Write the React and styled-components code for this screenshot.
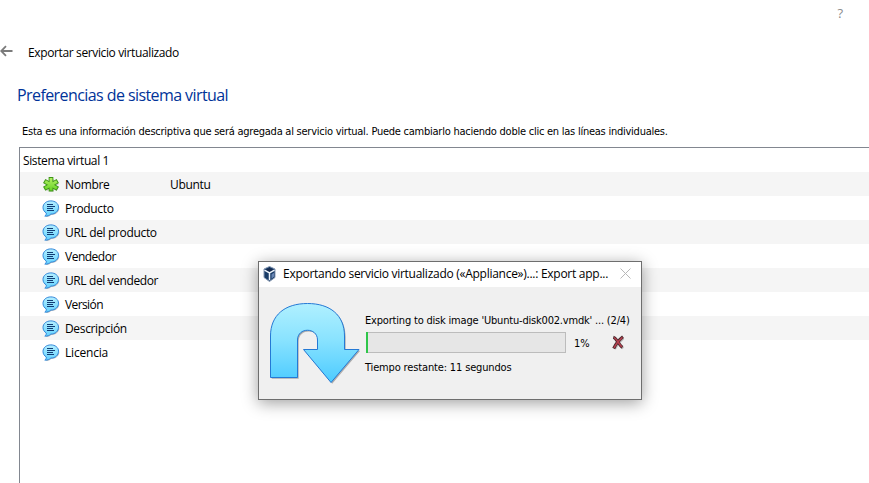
import React from 'react';
import styled, { createGlobalStyle } from 'styled-components';

const GlobalStyle = createGlobalStyle`
  *, *::before, *::after { box-sizing: border-box; }
  body { margin: 0; background: #fff; overflow: hidden; }
`;

const Wizard = styled.main`
  position: relative;
  display: flex;
  flex-direction: column;
  width: 869px;
  height: 483px;
  overflow: hidden;
  background: #fff;
  color: #000;
  font: 12px/16px 'Open Sans', 'Noto Sans', sans-serif;
`;

const TopBar = styled.div`
  display: flex;
  justify-content: flex-end;
  height: 40px;
  padding: 5px 26px 0 0;
  color: #8c8c8c;
  font-size: 13px;
`;

const Header = styled.header`
  display: flex;
  align-items: center;
  gap: 15px;
  height: 26px;
`;

const BackIcon = styled.svg`
  width: 13px;
  height: 12px;
  margin-top: -4px;
`;

const WizardTitle = styled.span`
  letter-spacing: -0.37px;
`;

const Heading = styled.h1`
  margin: 17px 0 0 17px;
  font-size: 16px;
  line-height: 24px;
  font-weight: 400;
  letter-spacing: -0.58px;
  color: #003399;
`;

const Description = styled.p`
  margin: 17px 0 0 22px;
  font: 11px/16px 'DejaVu Sans Condensed', 'DejaVu Sans', sans-serif;
  font-stretch: condensed;
  letter-spacing: -0.245px;
  white-space: nowrap;
`;

const Settings = styled.section`
  flex: 1;
  margin: 7px 0 0 19px;
  border-top: 1px solid #828790;
  border-left: 1px solid #828790;
`;

const GroupRow = styled.div`
  height: 24px;
  padding-left: 3px;
  line-height: 25px;
  letter-spacing: -0.38px;
`;

const SettingRow = styled.div`
  display: grid;
  grid-template-columns: 18px 105px 1fr;
  align-items: center;
  height: 24px;
  padding-left: 22px;
  line-height: 25px;
  background: ${(p) => (p.$shaded ? '#f5f5f5' : '#fff')};
`;

const RowIcon = styled.svg`
  width: 18px;
  height: 18px;
`;

const Cell = styled.span`
  padding-left: 5px;
  letter-spacing: ${(p) => p.$spacing || '-0.34px'};
  white-space: nowrap;
`;

const Dialog = styled.div`
  position: absolute;
  left: 258px;
  top: 261px;
  width: 384px;
  height: 139px;
  display: flex;
  flex-direction: column;
  border: 1px solid #6e6e6e;
  background: #f0f0f0;
  box-shadow: 0 3px 15px rgba(0, 0, 0, 0.38);
`;

const DialogBar = styled.div`
  display: flex;
  align-items: center;
  flex: 0 0 25px;
  padding: 0 10px 0 4px;
  background: #fff;
`;

const AppIcon = styled.svg`
  width: 13px;
  height: 16px;
  margin-top: -1px;
`;

const DialogTitle = styled.span`
  flex: 1;
  margin-top: -2px;
  padding-left: 7px;
  letter-spacing: -0.27px;
  white-space: nowrap;
`;

const CloseIcon = styled.svg`
  width: 11px;
  height: 11px;
  margin-top: -2px;
`;

const DialogBody = styled.div`
  display: flex;
  flex: 1;
  padding: 16px 0 0 11px;
`;

const ArrowImage = styled.svg`
  flex: none;
  width: 92px;
  height: 84px;
`;

const Progress = styled.div`
  display: flex;
  flex-direction: column;
  padding: 10px 0 0 4px;
  font: 11px/15px 'DejaVu Sans Condensed', 'DejaVu Sans', sans-serif;
  font-stretch: condensed;
`;

const Status = styled.span`
  margin-left: -1px;
  letter-spacing: ${(p) => p.$spacing};
  white-space: nowrap;
`;

const MeterRow = styled.div`
  display: flex;
  align-items: center;
  height: 21px;
  margin: 4px 0 7px;
`;

const Meter = styled.div`
  width: 200px;
  height: 21px;
  border: 1px solid #bcbcbc;
  background: #e6e6e6;
`;

const MeterFill = styled.div`
  width: 2px;
  height: 21px;
  margin: -1px 0 0 -1px;
  background: #2fc64a;
`;

const Percent = styled.span`
  width: 44px;
  padding: 2px 0 0 8px;
  letter-spacing: -0.1px;
`;

const CancelIcon = styled.svg`
  width: 16px;
  height: 17px;
`;

function NameIcon() {
  return (
    <RowIcon viewBox="0 0 18 18">
      <defs>
        <linearGradient id="leaf" gradientUnits="userSpaceOnUse" x1="0" y1="1" x2="0" y2="16">
          <stop offset="0" stopColor="#b8f268" />
          <stop offset="1" stopColor="#5fd01f" />
        </linearGradient>
      </defs>
      <path d="M9.700 3.200V15.500M3.800 6.200l11.800 6.800M15.600 6.200L3.800 13" stroke="#8a9184" strokeWidth="4.600" opacity=".4" />
      <path d="M9 1V15.600M2.200 5l13.600 7.800M15.800 5L2.200 12.800" stroke="#3d9517" strokeWidth="4.700" />
      <path d="M9 2V14.600M3.100 5.500l11.800 6.800M14.900 5.500L3.100 12.300" stroke="url(#leaf)" strokeWidth="2.900" />
    </RowIcon>
  );
}

function NoteIcon() {
  return (
    <RowIcon viewBox="0 0 18 18">
      <defs>
        <linearGradient id="bubble" x2="0" y2="1">
          <stop offset="0" stopColor="#b5efff" />
          <stop offset="1" stopColor="#62d1ff" />
        </linearGradient>
      </defs>
      <path d="M9.400 2.200c4.500 0 7.900 2.400 7.900 6.100 0 3.900-3.600 6.700-8.200 6.800-1.400 1.400-3 2-5.200 2z" fill="#888" opacity=".5" />
      <path d="M8.800.900c4.400 0 7.700 2.500 7.700 6.300 0 4-3.200 6.900-7.700 6.900-1.300 1.400-3.300 2.200-6 2 1.200-.8 1.600-1.900 1.500-3.100C2.300 11.800 1 9.900 1 7.500 1 3.600 4.400.900 8.800.900z" fill="url(#bubble)" stroke="#2f86da" />
      <path d="M5 4.500h6M5 6.500h8M5 8.500h6M5 10.500h7" stroke="#123d75" />
    </RowIcon>
  );
}

function TurnArrow() {
  return (
    <ArrowImage viewBox="0 0 92 84">
      <defs>
        <linearGradient id="turn" x2="0" y2="1">
          <stop offset="0" stopColor="#b0f0ff" />
          <stop offset=".45" stopColor="#8ae3ff" />
          <stop offset="1" stopColor="#4ccbff" />
        </linearGradient>
        <filter id="soft" x="-10%" y="-10%" width="120%" height="120%">
          <feGaussianBlur stdDeviation=".7" />
        </filter>
      </defs>
      <path d="M.5 74.500V33C.5 12 15 .5 37.500.500S74.500 12 74.500 33V46.500H89L61 79.500 33.500 46.500H47.500V37C47.500 24 27.500 24 27.500 37V74.500z" transform="translate(1.200 1.200)" fill="#777" opacity=".55" filter="url(#soft)" />
      <path d="M.5 74.500V33C.5 12 15 .5 37.500.500S74.500 12 74.500 33V46.500H89L61 79.500 33.500 46.500H47.500V37C47.500 24 27.500 24 27.500 37V74.500z" fill="url(#turn)" stroke="#2479d5" />
    </ArrowImage>
  );
}

const ROWS = [
  { label: 'Nombre', value: 'Ubuntu', icon: NameIcon, spacing: '-0.3px' },
  { label: 'Producto', icon: NoteIcon },
  { label: 'URL del producto', icon: NoteIcon },
  { label: 'Vendedor', icon: NoteIcon, spacing: '-0.5px' },
  { label: 'URL del vendedor', icon: NoteIcon, spacing: '-0.4px' },
  { label: 'Versión', icon: NoteIcon, spacing: '-0.6px' },
  { label: 'Descripción', icon: NoteIcon },
  { label: 'Licencia', icon: NoteIcon, spacing: '-0.2px' },
];

function ExportDialog() {
  return (
    <Dialog role="dialog">
      <DialogBar>
        <AppIcon viewBox="0 0 13 16">
          <path d="M6.500.5 12 3v8.500l-5.500 4-5.500-4V3z" fill="#183b66" stroke="#8798b3" />
          <path d="M2.500 4 6.500 2l4 2-4 2.200z" fill="#172b4e" />
          <path d="M1.500 4.200l5 2.600 5-2.600M6.500 6.800v7.500" fill="none" stroke="#eef4fa" strokeWidth="1.500" />
          <path d="M8.500 8.300l2.500-1.500v4l-2.500 2z" fill="#6986b4" />
        </AppIcon>
        <DialogTitle>Exportando servicio virtualizado («Appliance»)...: Export app...</DialogTitle>
        <CloseIcon viewBox="0 0 11 11">
          <path d="M.5.500l10 10M10.500.500l-10 10" stroke="#b8b8b8" />
        </CloseIcon>
      </DialogBar>
      <DialogBody>
        <TurnArrow />
        <Progress>
          <Status $spacing="-0.19px">Exporting to disk image 'Ubuntu-disk002.vmdk' ... (2/4)</Status>
          <MeterRow>
            <Meter><MeterFill /></Meter>
            <Percent>1%</Percent>
            <CancelIcon viewBox="0 0 16 17">
              <path d="M4 3.500c2 .7 2.800 2.800 4.300 4.600 1.500 2 2.300 3.800 4.200 5.400M12.500 3.500C9.500 6 6.500 9.500 4 14" transform="translate(.8 .8)" fill="none" stroke="#aaa" strokeWidth="2.500" opacity=".7" />
              <path d="M3.300 3.200c2.200.6 3.200 3 4.700 4.900 1.400 2 2.500 4 4.400 5.300M13 2.800C9.500 5.500 6 9.500 3.700 14.500" fill="none" stroke="#49282c" strokeWidth="3.100" />
              <path d="M4 3.600c2 .7 2.800 2.700 4.200 4.600 1.400 2 2.300 3.700 3.800 4.800M12.400 3.400C9.500 5.800 6.200 9.500 4 13.800" fill="none" stroke="#b5404f" strokeWidth="1.500" />
            </CancelIcon>
          </MeterRow>
          <Status $spacing="-0.15px">Tiempo restante: 11 segundos</Status>
        </Progress>
      </DialogBody>
    </Dialog>
  );
}

export default function App() {
  return (
    <Wizard>
      <GlobalStyle />
      <TopBar>?</TopBar>
      <Header>
        <BackIcon viewBox="0 0 13 12">
          <path d="M1 6h11.500M6 1.200L1.200 6 6 10.800" fill="none" stroke="#7b7b7b" strokeWidth="1.800" />
        </BackIcon>
        <WizardTitle>Exportar servicio virtualizado</WizardTitle>
      </Header>
      <Heading>Preferencias de sistema virtual</Heading>
      <Description>
        Esta es una información descriptiva que será agregada al servicio virtual. Puede cambiarlo haciendo doble clic en las líneas individuales.
      </Description>
      <Settings>
        <GroupRow>Sistema virtual 1</GroupRow>
        {ROWS.map(({ label, value, icon: Icon, spacing }, i) => (
          <SettingRow key={label} $shaded={i % 2 === 0}>
            <Icon />
            <Cell $spacing={spacing}>{label}</Cell>
            <Cell $spacing={spacing}>{value}</Cell>
          </SettingRow>
        ))}
      </Settings>
      <ExportDialog />
    </Wizard>
  );
}
